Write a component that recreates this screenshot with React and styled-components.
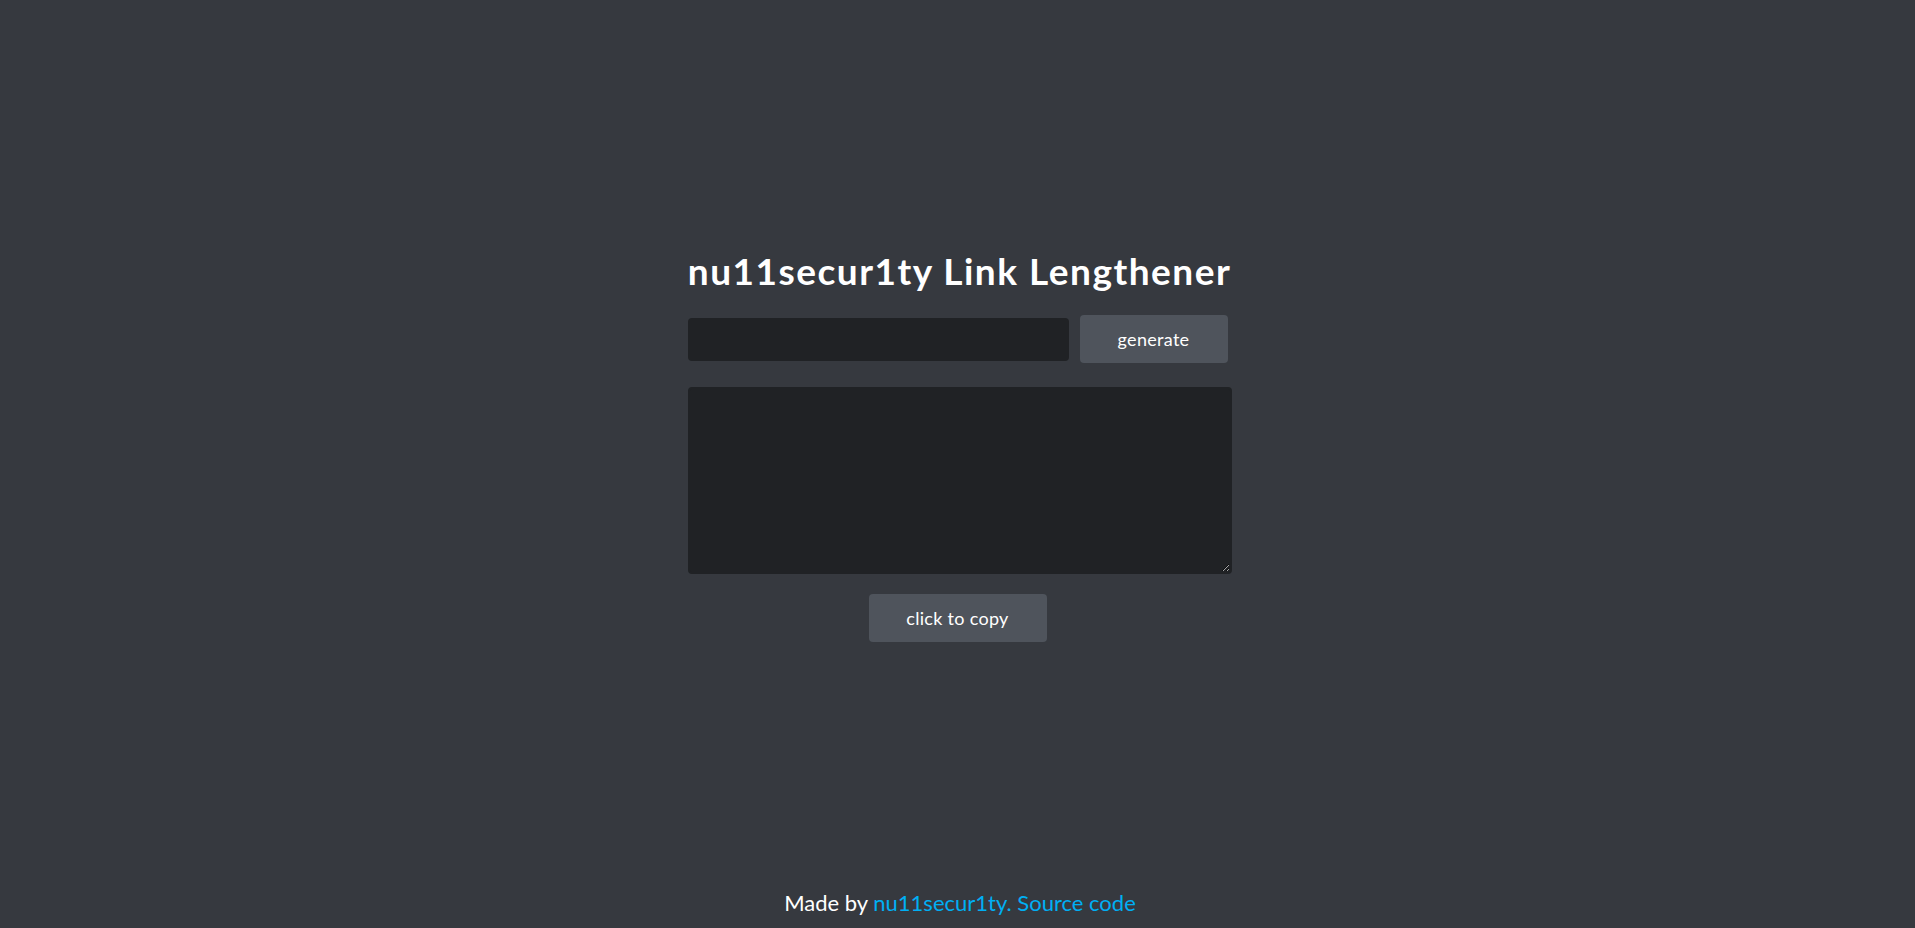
import React from "react";
import styled, { createGlobalStyle } from "styled-components";

const Global = createGlobalStyle`
  html, body { margin: 0; padding: 0; background: #36393f; }
  body { font-family: Lato, "Open Sans", sans-serif; color: #ffffff; }
  * { box-sizing: border-box; }
`;

const Page = styled.div`
  min-height: 100vh;
  display: flex;
  flex-direction: column;
  align-items: center;
`;

const Main = styled.main`
  flex: 1;
  width: 540px;
  padding-top: 249px;
  display: flex;
  flex-direction: column;
  align-items: center;
`;

const Title = styled.h1`
  margin: 0;
  padding-left: 4px;
  font-size: 37px;
  line-height: 44px;
  font-weight: 700;
  letter-spacing: 1.5px;
  color: #ffffff;
  white-space: nowrap;
`;

const Row = styled.div`
  width: 100%;
  margin-top: 22px;
  display: flex;
  align-items: center;
  gap: 11px;
`;

const Input = styled.input`
  flex: 1;
  height: 43px;
  border: none;
  border-radius: 4px;
  background: #202225;
  color: #dcddde;
  font-family: inherit;
  font-size: 16px;
  padding: 0 10px;
  outline: none;
`;

const Button = styled.button`
  width: ${(p) => p.$w}px;
  height: 48px;
  border: none;
  border-radius: 4px;
  background: #4f545c;
  color: #ffffff;
  font-family: inherit;
  font-size: 18px;
  letter-spacing: 0.3px;
  cursor: pointer;
`;

const Output = styled.textarea`
  box-sizing: content-box;
  align-self: flex-start;
  width: 100%;
  height: 183px;
  margin-top: 24px;
  padding: 0;
  border: 2px solid #202225;
  border-radius: 4px;
  background: #202225;
  color: #dcddde;
  resize: both;
  outline: none;
`;

const CopyButton = styled(Button)`
  margin-top: 20px;
`;

const Footer = styled.footer`
  padding: 0 0 12px 5px;
  font-size: 22px;
  line-height: 27px;
  color: #ffffff;
`;

const Link = styled.a`
  color: #00aff4;
  text-decoration: none;
`;

export default function App() {
  return (
    <Page>
      <Global />
      <Main>
        <Title>nu11secur1ty Link Lengthener</Title>
        <Row>
          <Input type="text" />
          <Button $w={148}>generate</Button>
        </Row>
        <Output />
        <CopyButton $w={178}>click to copy</CopyButton>
      </Main>
      <Footer>
        Made by <Link href="#">nu11secur1ty.</Link> <Link href="#">Source code</Link>
      </Footer>
    </Page>
  );
}
